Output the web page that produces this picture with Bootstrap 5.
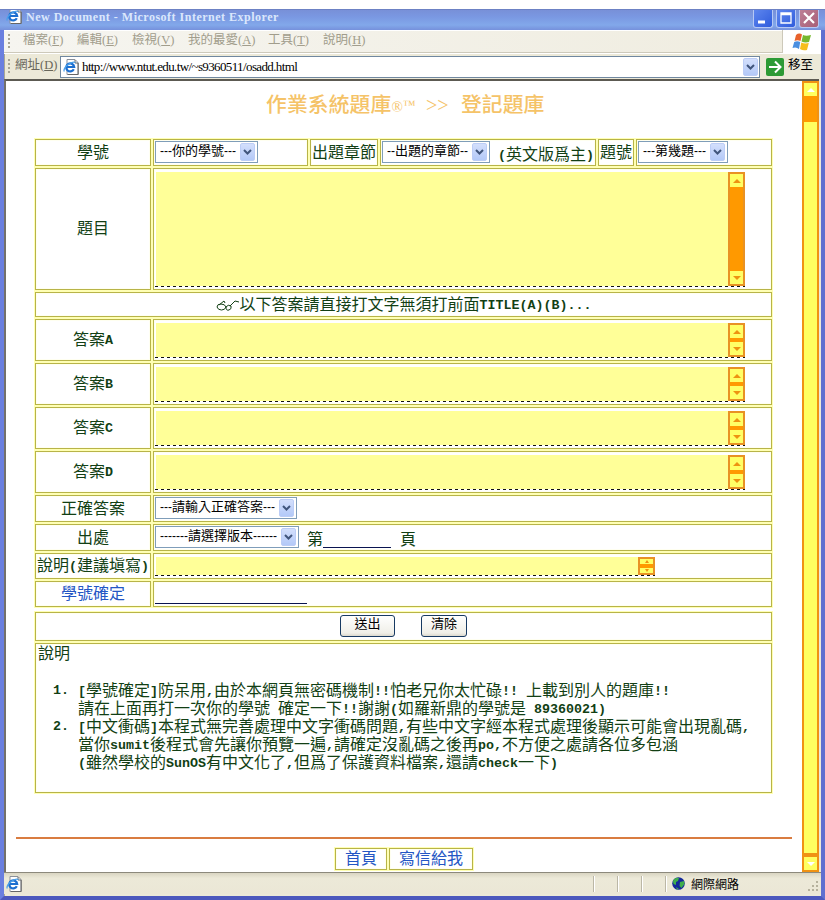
<!DOCTYPE html>
<html lang="zh-Hant">
<head>
<meta charset="utf-8">
<title>New Document</title>
<link rel="stylesheet" href="https://cdn.jsdelivr.net/npm/bootstrap@5.3.0/dist/css/bootstrap.min.css">
<style>
body{background:#fff;width:825px;height:900px;overflow:hidden;padding-top:9px;font-family:"Liberation Serif","Noto Sans CJK TC",sans-serif;font-size:16px;line-height:18px;color:#123f14}
.win{height:891px;background:#ece9d8;border-left:4px solid #6a7fdf;border-right:4px solid #5f6fd0;border-bottom:4px solid #4c58bd;box-shadow:inset 1px 0 #a9a894}
.titlebar{height:21px;margin:0 -4px;background:linear-gradient(#7890d8,#7a98e2 35%,#82a8ea 75%,#7691dc);padding-left:6px;padding-right:6px;color:#dbe7fc;font-weight:700;font-size:12px;border-top:1px solid #6c81c4}
.titlebar .cap{letter-spacing:.5px;margin-left:4px;line-height:14px;white-space:pre}
.wbtn{width:20px;height:18px;border:1px solid #b6c8f4;border-top:0;border-radius:0 0 3px 3px;background:linear-gradient(135deg,#5e86ee,#2f5cdc);margin-left:3px;display:block}
.wbtn.cls{background:linear-gradient(135deg,#bd7f95,#a85f78)}
.menubar{height:23px;background:linear-gradient(90deg,#f6f5f0,#efecdf);border-top:1px solid #fff;border-bottom:1px solid #cdc9ba;color:#a19d8c;font-size:12.5px;padding-left:19px}
.menubar span{white-space:nowrap;display:block;margin-top:-3px}
.grip{width:2px;height:15px;background:repeating-linear-gradient(#a8a595 0 2px,transparent 2px 4px)}
.flagbox{width:39px;height:23px;background:#fff;border-left:1px solid #cdc9ba}
.addr{height:26px;border-top:1px solid #fff;font-size:12.5px;color:#68665a;padding-left:4px}
.addr>span{margin-top:-3px}
.field{height:22px;width:700px;background:#fff;border:1px solid #7088a0;color:#000}
.url{font-size:13px;letter-spacing:-.62px;margin-left:3px}
.dd{width:15px;height:18px;background:linear-gradient(#d3dffc,#b3c9f8);border-radius:2px;border:1px solid #bccdf6}
.view{height:793px;border-top:2px solid #5c5a52;border-left:2px solid #74716a;background:#fff;margin-right:2px}
.page{width:796px;padding:13px 0 0 29px}
.ttl{height:24px;font-size:20.8px;line-height:22px;color:#f5c368;font-weight:500;padding-left:231px;white-space:pre;letter-spacing:.1px}
.sheet{width:737px;margin-top:21px}
.bx{border:1px solid #b8b448;box-shadow:0 0 0 1px #ffffb4,inset 0 0 0 1px #fffff0;background:#fff;white-space:nowrap}
.rw{margin-bottom:2px;gap:2px}
.lb{width:116px;display:flex;align-items:center;justify-content:center;flex:none}
.m{font:700 13.33px/12px "Liberation Mono",monospace;white-space:pre;vertical-align:1px}
.sel{height:22px;border:1px solid #7f9db9;background:#fff;color:#000;font-size:13px;line-height:18px;padding:0 2px 0 4px;display:flex;align-items:center;justify-content:space-between;margin:1px;flex:none}
.dh{font:12px/18px "Liberation Sans",sans-serif}
.sel>span{margin-top:-3px}
.ta{margin:3px 0 0 1px;display:flex;width:590px;background:linear-gradient(90deg,#fff 1px,#ffff98 1px);position:relative}
.ta::after{content:"";position:absolute;left:0;right:0;bottom:-1px;height:1px;background:repeating-linear-gradient(90deg,#111 0 3px,#fff 3px 6px)}
.sb{width:17px;margin-left:auto;background:#ff9900;border:2px solid #e89224;display:flex;flex-direction:column;justify-content:space-between}
.sb b{display:flex;height:13px;background:#ffff66;align-items:center;justify-content:center}
.sb b::before{content:"";border:4px solid transparent;border-top:0;border-bottom:4px solid #ee9310}
.sb b:last-child::before{border-bottom:0;border-top:4px solid #ee9310}
.sb.tiny b{height:5px}
.sb.tiny b::before{border-width:0 2px 3px}
.sb.tiny b:last-child::before{border-width:3px 2px 0}
.ln{border-bottom:1px solid #0a1450;flex:none}
.xb{height:22px;border:1px solid #173a62;border-radius:3px;background:linear-gradient(#fff,#f0efe8 85%,#dcd8cc);color:#000;font-size:13px;line-height:16px;text-align:center;padding:0 0 4px}
.notes{height:150px;padding:1px 2px}
.ol-row{padding-left:15px}
.num{width:25px;flex:none;line-height:18px}
.blue{color:#2456c4}
.rule{height:2px;background:#d97c40;width:776px;margin:44px 0 9px -19px}
.vs{width:17px;background:#ffff60;border:2px solid #f09214;display:flex;flex-direction:column;height:791px}
.vs i{display:flex;height:13px;align-items:center;justify-content:center;flex:none}
.vs i::before{content:"";border:4px solid transparent;border-top:0;border-bottom:4px solid #fff}
.vs i:last-child::before{border-bottom:0;border-top:4px solid #fff}
.status{height:22px;border-top:1px solid #8c897c;background:linear-gradient(#d9d5c2,#ece9d8 25%,#ebe7d6);font-size:12px;color:#000}
.sep{width:24px;height:16px;border-left:1px solid #bbb7a6;box-shadow:inset 1px 0 #fff}
svg{display:block;flex:none}
</style>
<script src="https://cdn.jsdelivr.net/npm/bootstrap@5.3.0/dist/js/bootstrap.bundle.min.js"></script>
</head>
<body>
<svg width="0" height="0" class="position-absolute">
<symbol id="ie" viewBox="0 0 16 16"><path d="M4 .5h8l3 3v12H4z" fill="#fff" stroke="#8a9099"/><path d="M12 1v3h3M15.200 4v11.500H5" fill="none" stroke="#666"/><path d="M10.800 10.200A4 4 0 1 1 11.200 8H4" fill="none" stroke="#1c6fd0" stroke-width="2.200"/><path d="M1.300 12.500C-.5 9 8 1.500 12.500 3.500" fill="none" stroke="#4aa0ea" stroke-width="1.200"/></symbol>
<symbol id="chev" viewBox="0 0 9 6"><path d="M1 1l3.500 3.500L8 1" fill="none" stroke="#40557c" stroke-width="2"/></symbol>
</svg>
<div class="win">
  <div class="titlebar d-flex align-items-start">
    <svg width="16" height="14" viewBox="0 2 16 14"><use href="#ie" width="16" height="16"/></svg>
    <span class="cap">New Document - Microsoft Internet Explorer</span>
    <div class="ms-auto d-flex">
      <svg class="wbtn" viewBox="0 0 18 17"><path d="M4 12h7" stroke="#fff" stroke-width="3"/></svg>
      <svg class="wbtn" viewBox="0 0 18 17"><path d="M4 3h10v10H4zM4 4.500h10" fill="none" stroke="#fff" stroke-width="1.300"/></svg>
      <svg class="wbtn cls" viewBox="0 0 18 17"><path d="M4 3l10 10M14 3L4 13" stroke="#fff" stroke-width="2.200"/></svg>
    </div>
  </div>
  <div class="menubar d-flex align-items-center position-relative">
    <div class="grip position-absolute" style="left:4px"></div>
    <span style="width:54px">檔案(<u>F</u>)</span><span style="width:55px">編輯(<u>E</u>)</span><span style="width:56px">檢視(<u>V</u>)</span><span style="width:80px">我的最愛(<u>A</u>)</span><span style="width:55px">工具(<u>T</u>)</span><span>說明(<u>H</u>)</span>
    <div class="flagbox ms-auto d-flex align-items-center justify-content-center">
      <svg width="20" height="18" viewBox="0 0 20 18"><path d="M4 2q3-2.500 6-.500L8.500 8Q5.500 6.500 2.500 8z" fill="#e8622c"/><path d="M11 2q3 1.500 8 0L17 9q-4 1-7.500-.500z" fill="#76b82e"/><path d="M2.200 9q3-1.500 6 0L7 16Q4 13.500.5 15z" fill="#4a8fe0"/><path d="M9.300 9.500q3.500 1.500 7.500.500L15 17q-4 1-7-1z" fill="#f6be1c"/></svg>
    </div>
  </div>
  <div class="addr d-flex align-items-center">
    <div class="grip"></div><span class="text-nowrap" style="width:46px;padding-left:5px">網址(<u>D</u>)</span>
    <div class="field d-flex align-items-center ms-1">
      <svg style="margin-left:2px" width="16" height="16"><use href="#ie" width="16" height="16"/></svg>
      <span class="url">http://www.ntut.edu.tw/~s9360511/osadd.html</span>
      <div class="dd d-flex align-items-center justify-content-center ms-auto" style="margin-right:1px"><svg width="9" height="6"><use href="#chev"/></svg></div>
    </div>
    <svg style="margin-left:6px;margin-right:4px" width="18" height="18" viewBox="0 0 18 18"><rect width="18" height="18" rx="2" fill="#2c9a35"/><path d="M3 9h11M9 3.500L14.500 9 9 14.500" fill="none" stroke="#fff" stroke-width="2"/></svg>
    <span class="text-black text-nowrap">移至</span>
  </div>
  <div class="view d-flex">
    <div class="page">
      <div class="ttl">作業系統題庫<span style="font-size:15px">®</span><span style="font-size:13px;vertical-align:3px">™</span><span style="font-size:20px">  &gt;&gt;  </span><span class="ps-1" style="margin-left:-2px">登記題庫</span></div>
      <div class="sheet">
        <div class="rw d-flex" style="height:27px">
          <div class="bx lb">學號</div>
          <div class="bx" style="width:155px"><div class="sel" style="width:103px"><span><span class="dh">---</span>你的學號<span class="dh">---</span></span><div class="dd d-flex align-items-center justify-content-center"><svg width="9" height="6"><use href="#chev"/></svg></div></div></div>
          <div class="bx d-flex align-items-center justify-content-center" style="width:68px">出題章節</div>
          <div class="bx d-flex" style="width:216px"><div class="sel" style="width:108px"><span><span class="dh">--</span>出題的章節<span class="dh">--</span></span><div class="dd d-flex align-items-center justify-content-center"><svg width="9" height="6"><use href="#chev"/></svg></div></div><span style="padding:6px 0 0 7px"><span class="m">(</span>英文版爲主<span class="m">)</span></span></div>
          <div class="bx d-flex align-items-center justify-content-center" style="width:36px">題號</div>
          <div class="bx" style="width:136px"><div class="sel" style="width:90px"><span><span class="dh">---</span>第幾題<span class="dh">---</span></span><div class="dd d-flex align-items-center justify-content-center"><svg width="9" height="6"><use href="#chev"/></svg></div></div></div>
        </div>
        <div class="rw d-flex" style="height:122px"><div class="bx lb">題目</div><div class="bx flex-fill"><div class="ta" style="height:114px"><div class="sb"><b></b><b></b></div></div></div></div>
        <div class="rw bx d-flex align-items-center justify-content-center gap-0" style="height:25px">
          <svg width="24" height="14" viewBox="0 0 24 14"><path d="M1 9q0-3 4-3t5 3q-1 3-4.500 3T1 9zM10 9q2-3 5-1 1 3-2 4t-3-3zM3 7l5-4 1 2M14 8l5-5 4 1" fill="none" stroke="#123f14"/></svg><span>以下答案請直接打文字無須打前面<span class="m">TITLE(A)(B)...</span></span>
        </div>
        <div class="rw d-flex" style="height:42px"><div class="bx lb"><span>答案<span class="m">A</span></span></div><div class="bx flex-fill"><div class="ta" style="height:34px"><div class="sb"><b></b><b></b></div></div></div></div>
        <div class="rw d-flex" style="height:42px"><div class="bx lb"><span>答案<span class="m">B</span></span></div><div class="bx flex-fill"><div class="ta" style="height:34px"><div class="sb"><b></b><b></b></div></div></div></div>
        <div class="rw d-flex" style="height:42px"><div class="bx lb"><span>答案<span class="m">C</span></span></div><div class="bx flex-fill"><div class="ta" style="height:34px"><div class="sb"><b></b><b></b></div></div></div></div>
        <div class="rw d-flex" style="height:42px"><div class="bx lb"><span>答案<span class="m">D</span></span></div><div class="bx flex-fill"><div class="ta" style="height:34px"><div class="sb"><b></b><b></b></div></div></div></div>
        <div class="rw d-flex" style="height:27px"><div class="bx lb">正確答案</div><div class="bx flex-fill"><div class="sel" style="width:142px"><span><span class="dh">---</span>請輸入正確答案<span class="dh">---</span></span><div class="dd d-flex align-items-center justify-content-center"><svg width="9" height="6"><use href="#chev"/></svg></div></div></div></div>
        <div class="rw d-flex" style="height:27px"><div class="bx lb">出處</div><div class="bx flex-fill d-flex"><div class="sel" style="width:144px"><span><span class="dh">-------</span>請選擇版本<span class="dh">------</span></span><div class="dd d-flex align-items-center justify-content-center"><svg width="9" height="6"><use href="#chev"/></svg></div></div><span style="padding:6px 0 0 7px">第</span><div class="ln" style="width:68px;height:23px"></div><span style="padding:6px 0 0 9px">頁</span></div></div>
        <div class="rw d-flex" style="height:26px"><div class="bx lb"><span>說明<span class="m">(</span>建議塡寫<span class="m">)</span></span></div><div class="bx flex-fill"><div class="ta" style="height:18px;width:500px"><div class="sb tiny"><b></b><b></b></div></div></div></div>
        <div class="d-flex rw" style="height:26px;margin-bottom:5px"><div class="bx lb blue">學號確定</div><div class="bx flex-fill"><div class="ln" style="width:152px;height:22px;margin-left:1px"></div></div></div>
        <div class="rw bx d-flex" style="height:29px;gap:26px;padding:2px 0 0 304px"><button class="xb" style="width:55px">送出</button><button class="xb" style="width:46px">清除</button></div>
        <div class="bx notes">
          <div>說明</div>
          <div class="ol-row d-flex" style="margin-top:19px"><span class="m num">1.</span><div><span class="m">[</span>學號確定<span class="m">]</span>防呆用<span class="m">,</span>由於本網頁無密碼機制<span class="m">!!</span>怕老兄你太忙碌<span class="m">!! </span>上載到別人的題庫<span class="m">!!</span><br>請在上面再打一次你的學號<span class="m"> </span>確定一下<span class="m">!!</span>謝謝<span class="m">(</span>如羅新鼎的學號是<span class="m"> 89360021)</span></div></div>
          <div class="ol-row d-flex"><span class="m num">2.</span><div><span class="m">[</span>中文衝碼<span class="m">]</span>本程式無完善處理中文字衝碼問題<span class="m">,</span>有些中文字經本程式處理後顯示可能會出現亂碼<span class="m">,</span><br>當你<span class="m">sumit</span>後程式會先讓你預覽一遍<span class="m">,</span>請確定沒亂碼之後再<span class="m">po,</span>不方便之處請各位多包涵<br><span class="m">(</span>雖然學校的<span class="m">SunOS</span>有中文化了<span class="m">,</span>但爲了保護資料檔案<span class="m">,</span>還請<span class="m">check</span>一下<span class="m">)</span></div></div>
        </div>
      </div>
      <div class="rule"></div>
      <div class="d-flex" style="gap:2px;padding-left:300px"><div class="bx blue text-center" style="width:52px;height:22px;padding-top:1px">首頁</div><div class="bx blue text-center" style="width:84px;height:22px;padding-top:1px">寫信給我</div></div>
    </div>
    <div class="vs"><i></i><div style="height:26px;background:#ff9900"></div><div class="flex-fill"></div><div style="height:4px;background:#f09214"></div><i></i></div>
  </div>
  <div class="status d-flex align-items-center">
    <svg style="margin-left:2px;margin-right:571px" width="16" height="16"><use href="#ie" width="16" height="16"/></svg>
    <div class="sep"></div><div class="sep"></div><div class="sep"></div><div class="sep" style="width:7px"></div>
    <svg width="13" height="13" viewBox="0 0 13 13"><circle cx="6.500" cy="6.500" r="6.300" fill="#14299a"/><path d="M1 4q2-4 6-3L6 4 4 5v3L1.500 7zM8 5l4-1 .5 3-3 4-2-2zM4 10l3 2-2 .5z" fill="#3fae4c"/></svg>
    <span style="margin-left:6px;padding-top:2px">網際網路</span>
    <svg class="ms-auto align-self-end" style="margin-right:2px;margin-bottom:2px" width="11" height="11" viewBox="0 0 11 11"><path d="M8 0h2v2H8zM8 4h2v2H8zM4 4h2v2H4zM8 8h2v2H8zM4 8h2v2H4zM0 8h2v2H0z" fill="#b5b19d"/></svg>
  </div>
</div>
</body>
</html>
